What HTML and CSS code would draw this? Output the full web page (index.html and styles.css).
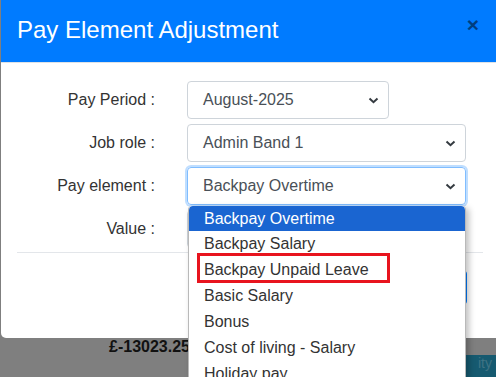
FILE: index.html
```html
<!DOCTYPE html>
<html lang="en">
<head>
    <meta charset="UTF-8">
    <meta name="viewport" content="width=device-width, initial-scale=1.0">
    <title>Pay Element Adjustment</title>
    <link rel="stylesheet" href="styles.css">
</head>
<body>
    <div class="modal">
        <div class="modal-header">
            <h5 class="modal-title">Pay Element Adjustment</h5>
            <span class="close">&times;</span>
        </div>
        <div class="modal-body">
            <label class="form-label">Pay Period :</label>
            <div class="select short">
                <span>August-2025</span>
                <svg width="11" height="7" viewBox="0 0 11 7"><path d="M1.5 1.5 L5.5 5.2 L9.5 1.5" fill="none" stroke="#343a40" stroke-width="2"/></svg>
            </div>

            <label class="form-label">Job role :</label>
            <div class="select">
                <span>Admin Band 1</span>
                <svg width="11" height="7" viewBox="0 0 11 7"><path d="M1.5 1.5 L5.5 5.2 L9.5 1.5" fill="none" stroke="#343a40" stroke-width="2"/></svg>
            </div>

            <label class="form-label">Pay element :</label>
            <div class="select focused">
                <span>Backpay Overtime</span>
                <svg width="11" height="7" viewBox="0 0 11 7"><path d="M1.5 1.5 L5.5 5.2 L9.5 1.5" fill="none" stroke="#343a40" stroke-width="2"/></svg>
            </div>

            <label class="form-label">Value :</label>
            <div class="select"></div>
        </div>
        <div class="modal-footer">
            <button class="btn-save">Save</button>
        </div>
    </div>

    <div class="backdrop-row">
        <span class="amount">£-13023.25</span>
        <span class="teal-block">ity</span>
    </div>

    <ul class="dropdown">
        <li class="active">Backpay Overtime</li>
        <li>Backpay Salary</li>
        <li>Backpay Unpaid Leave</li>
        <li>Basic Salary</li>
        <li>Bonus</li>
        <li>Cost of living - Salary</li>
        <li>Holiday pay</li>
        <span class="highlight-box"></span>
    </ul>
</body>
</html>
```

FILE: styles.css
```css
/* Base */
* {
    margin: 0;
    padding: 0;
    box-sizing: border-box;
    font-family: 'Liberation Sans', Arial, sans-serif;
}

body {
    background-color: #7f7f7f;
    width: 496px;
    height: 377px;
    overflow: hidden;
    position: relative;
}

.modal {
    width: 500px;
    margin-left: 1px;
    background-color: #fff;
    border-radius: 0 0 5px 5px;
}

.modal-header {
    height: 63px;
    background-color: #007bff;
    border-bottom: 1px solid #dee2e6;
    display: flex;
    align-items: flex-start;
    justify-content: space-between;
    padding: 15px 0 0 16px;
}

.modal-title {
    color: #fff;
    font-size: 24px;
    font-weight: 400;
    line-height: 30px;
}

.close {
    color: #000;
    opacity: 0.5;
    font-size: 21px;
    font-weight: 700;
    line-height: 18px;
    margin-right: 22px;
    margin-top: 1px;
}

.modal-body {
    display: grid;
    grid-template-columns: 138px 279px;
    column-gap: 32px;
    row-gap: 5px;
    padding: 18px 0 4px 16px;
}

.form-label {
    height: 38px;
    display: flex;
    align-items: center;
    justify-content: flex-end;
    font-size: 16px;
    color: #333;
}

.select {
    height: 38px;
    border: 1px solid #ced4da;
    border-radius: 4px;
    display: flex;
    align-items: center;
    justify-content: space-between;
    padding: 0 9px 0 15px;
    font-size: 16px;
    color: #495057;
}

.select.short {
    width: 202px;
}

.select.focused {
    border-color: #80bdff;
    box-shadow: 0 0 0 2px rgba(0, 123, 255, 0.25);
}

.modal-footer {
    height: 86px;
    margin: 0 18px 0 16px;
    border-top: 1px solid #e3e6ea;
    display: flex;
    justify-content: flex-end;
    padding: 17px 16px 0 0;
}

.btn-save {
    width: 80px;
    height: 35px;
    background-color: #007bff;
    border: 1px solid #007bff;
    border-radius: 4px;
    color: #fff;
    font-size: 16px;
}

.backdrop-row {
    display: flex;
    align-items: flex-start;
    height: 39px;
}

.amount {
    margin: 1px 0 0 109px;
    font-size: 16px;
    font-weight: 700;
    line-height: 16px;
    color: #111;
}

.teal-block {
    margin: 17px 0 0 auto;
    width: 120px;
    height: 22px;
    background-color: #165a70;
    color: #3f7384;
    font-size: 14px;
    text-align: right;
    padding-right: 4px;
}

/* Open dropdown list */
.dropdown {
    position: absolute;
    left: 188px;
    top: 206px;
    width: 278px;
    height: 171px;
    overflow: hidden;
    list-style: none;
    background-color: #fff;
    border: 1px solid #b9b9b9;
    border-top: none;
    border-bottom: none;
    border-radius: 4px 4px 0 0;
    box-shadow: 3px 2px 6px rgba(0, 0, 0, 0.25);
}

.dropdown li {
    height: 26px;
    line-height: 25px;
    padding-left: 15px;
    font-size: 16px;
    color: #333;
}

.dropdown li.active {
    height: 25px;
    background-color: #1a65d1;
    color: #fff;
    border-radius: 4px 4px 0 0;
    padding-left: 15px;
}

.highlight-box {
    position: absolute;
    left: 8px;
    top: 47px;
    width: 193px;
    height: 30px;
    border: 3px solid #e8141e;
}
```
